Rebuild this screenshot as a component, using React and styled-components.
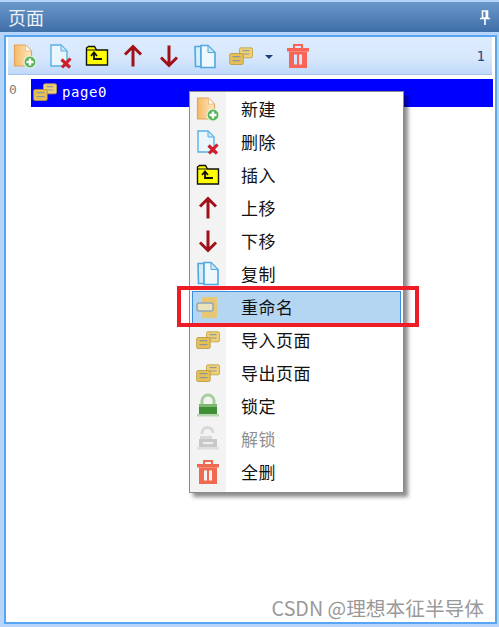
import React from "react";
import styled, { createGlobalStyle } from "styled-components";

const Global = createGlobalStyle`
  html, body { margin: 0; padding: 0; background: #fff; }
  body { font-family: "Noto Sans CJK SC", "Liberation Sans", sans-serif; }
`;

const Frame = styled.div`
  position: relative; width: 499px; height: 627px; box-sizing: border-box;
  padding: 2px 0 3px; background: #b7d4fa; overflow: hidden;
  display: flex; flex-direction: column;
`;
const TitleBar = styled.div`
  height: 30px; box-sizing: border-box; flex: none; padding: 0 9px 0 8px;
  display: flex; align-items: center; justify-content: space-between;
  background: linear-gradient(#6b98cc, #3f6fa8); color: #eef3fa;
  font-size: 18px; line-height: 30px;
`;
const Panel = styled.div`
  flex: 1; margin: 3px 2px 0 4px; padding: 0 3px 0 2px; border: 2px solid #57a6f4;
  background: #fff; display: flex; flex-direction: column; min-height: 0;
`;
const Toolbar = styled.div`
  height: 38px; box-sizing: border-box; flex: none; padding: 1px 7px 0 4px;
  display: flex; align-items: center;
  background: linear-gradient(#dcebfd 0%, #d8e8fc 55%, #c0d9fa 100%);
  border-bottom: 1px solid #a3c3ec;
`;
const ToolSlot = styled.div`
  width: 26px; height: 28px; margin-right: ${p => p.$gap ?? 10}px; flex: none;
  display: flex; align-items: center; justify-content: center;
`;
const Caret = styled.span`
  width: 0; height: 0; margin: 2px 12px 0 11px; flex: none;
  border-left: 4px solid transparent; border-right: 4px solid transparent; border-top: 4px solid #1f3f78;
`;
const Count = styled.span`
  margin-left: auto; color: #2a4a80; font: 14px "DejaVu Sans Mono", monospace;
`;
const Tree = styled.div`flex: 1; padding-top: 4px;`;
const TreeRow = styled.div`display: flex; align-items: flex-start; height: 28px;`;
const RowIndex = styled.span`
  width: 23px; flex: none; padding: 3px 0 0 1px; box-sizing: border-box; color: #808080;
  font: 13px "DejaVu Sans Mono", monospace;
`;
const RowBody = styled.div`
  flex: 1; height: 28px; margin-right: -1px; background: #0000ff; color: #fff;
  display: flex; align-items: center; padding: 0 0 2px 2px; box-sizing: border-box; gap: 5px;
  font: 14px "DejaVu Sans Mono", monospace; letter-spacing: .6px;
`;
const Menu = styled.div`
  position: absolute; left: 189px; top: 91px; width: 215px; height: 402px; box-sizing: border-box;
  padding: 1px 2px 0 2px; background: linear-gradient(90deg, #f3f3f3 0 36px, #fff 36px);
  border: 1px solid #8a8a8a; box-shadow: 4px 4px 4px rgba(0,0,0,.45);
`;
const MenuItem = styled.div`
  height: 33px; box-sizing: border-box; display: flex; align-items: center; padding-bottom: 2px;
  color: ${p => (p.$disabled ? "#8f8f8f" : "#111")};
  font-size: 17px; letter-spacing: 0.5px;
  background: ${p => (p.$active ? "#b5d6f3" : "transparent")};
  border: 1px solid ${p => (p.$active ? "#3a8ee0" : "transparent")};
`;
const MenuIcon = styled.span`
  width: 29px; flex: none; margin-right: 19px; display: flex; justify-content: center; align-items: center;
`;
const Highlight = styled.div`
  position: absolute; left: 177px; top: 286px; width: 242px; height: 41px; box-sizing: border-box;
  border: 4px solid #ee1c25; pointer-events: none;
`;
const Watermark = styled.div`
  position: absolute; right: 15px; top: 596px; color: #999; font-size: 19.700px; line-height: 24px;
`;

const NewIcon = () => (
  <svg width="26" height="26" viewBox="0 0 26 26">
    <defs>
      <linearGradient id="newFill" x1="0" x2="1" y1="0" y2="0">
        <stop offset="0" stopColor="#f6b968" /><stop offset="1" stopColor="#ffe9be" />
      </linearGradient>
    </defs>
    <path d="M2.500 2h11l6 6v15h-17z" fill="url(#newFill)" stroke="#e0a45c" strokeWidth="1.200"/>
    <path d="M13.500 2v6h6z" fill="#fff" stroke="#e8c08a"/>
    <circle cx="18" cy="19" r="6" fill="#58b058" stroke="#dff3da" strokeWidth="1.200"/>
    <path d="M18 15.500v7M14.500 19h7" stroke="#fff" strokeWidth="2.400"/>
  </svg>
);
const DeleteIcon = () => (
  <svg width="26" height="26" viewBox="0 0 26 26">
    <path d="M3 2h10l6 6v15H3z" fill="#eaf6fd" stroke="#58b0e4" strokeWidth="1.400"/>
    <path d="M13 2v6h6z" fill="#cde7f7" stroke="#58b0e4"/>
    <path d="M13.500 16.500l8.500 8M22.500 15.500l-8.500 9" stroke="#d0202c" strokeWidth="3.200"/>
  </svg>
);
const InsertIcon = () => (
  <svg width="24" height="22" viewBox="0 0 24 22">
    <path d="M1.500 5V3l2-1.500h6l2 3.500h11v15h-21z" fill="#ffff00" stroke="#111" strokeWidth="1.400"/>
    <path d="M1 5h10" stroke="#111"/>
    <path d="M17 14h-8V9M6 11l3-3.500 3 3.500" fill="none" stroke="#111" strokeWidth="1.800"/>
  </svg>
);
const UpIcon = () => (
  <svg width="20" height="24" viewBox="0 0 20 24">
    <path d="M10 22.500V2.500M2 10.500l8-8 8 8" fill="none" stroke="#a01018" strokeWidth="3"/>
  </svg>
);
const DownIcon = () => (
  <svg width="20" height="24" viewBox="0 0 20 24">
    <path d="M10 1.500v20M2 13.500l8 8 8-8" fill="none" stroke="#a01018" strokeWidth="3"/>
  </svg>
);
const CopyIcon = () => (
  <svg width="24" height="25" viewBox="0 0 24 25">
    <path d="M2 2.500h6v20H2.500z" fill="#d5ecfb" stroke="#4fa9de" strokeWidth="1.600"/>
    <path d="M8 1.500h7l7 7v15H8z" fill="#eef8fe" stroke="#4fa9de" strokeWidth="1.600"/>
    <path d="M15 1.500v7h7z" fill="#cfe7f7" stroke="#4fa9de"/>
  </svg>
);
const PagesIcon = () => (
  <svg width="24" height="18" viewBox="0 0 24 18">
    <rect x="10.500" y="0.800" width="13" height="10" rx="1.500" fill="#f0d070" stroke="#b8a04a" strokeWidth=".8"/>
    <path d="M13.500 3.700h7M13.500 7h7" stroke="#8d9aa0" strokeWidth="1.200"/>
    <rect x="0.700" y="6.500" width="13.500" height="11" rx="1.500" fill="#e8bf55" stroke="#b0953e" strokeWidth=".8"/>
    <path d="M3.500 9.700h8M3.500 13.700h8" stroke="#8a97a0" strokeWidth="1.200"/>
  </svg>
);
const RenameIcon = () => (
  <svg width="24" height="24" viewBox="0 0 24 24" opacity=".85">
    <rect x="6" y="2" width="15" height="21" rx="1" fill="#f0c45e"/>
    <rect x="1" y="8" width="16" height="8" rx="2" fill="#f4e6b4" stroke="#8aa0b0" strokeWidth="1.500"/>
  </svg>
);
const TrashIcon = ({ color = "#fa6456" }) => (
  <svg width="24" height="26" viewBox="0 0 24 26">
    <path d="M1 5h22v3.500H1z" fill={color}/>
    <path d="M8 5.500V2h8v3.500" fill="none" stroke={color} strokeWidth="2"/>
    <path fillRule="evenodd" d="M3 8.500h18V25H3zM8 11.500v10h3v-10zM13 11.500v10h3v-10z" fill={color}/>
  </svg>
);
const LockIcon = () => (
  <svg width="24" height="25" viewBox="0 0 24 25">
    <path d="M6 12V8a6 6 0 0 1 12 0v4" fill="none" stroke="#a5cf9c" strokeWidth="3"/>
    <rect x="3" y="11" width="18" height="10" fill="#3f8f35"/>
    <rect x="3" y="11" width="18" height="3" fill="#7fb874"/>
    <rect x="1" y="21" width="22" height="2.500" fill="#b8d8b0"/>
  </svg>
);
const UnlockIcon = () => (
  <svg width="24" height="25" viewBox="0 0 24 25">
    <path d="M6 8V7a5.500 5.500 0 0 1 11 0" fill="none" stroke="#d8d8d8" strokeWidth="3"/>
    <path d="M4 10h12v3H4z" fill="#d8d8d8"/>
    <rect x="3" y="13" width="18" height="8" fill="#c8c8c8"/>
    <rect x="7" y="16" width="10" height="2" fill="#eee"/>
    <rect x="1" y="21" width="22" height="2.500" fill="#dedede"/>
  </svg>
);
const Pin = () => (
  <svg width="10" height="15" viewBox="0 0 10 15">
    <path d="M2.500 1h5v7h-5zM0 8.500h10M5 8.500V15" fill="none" stroke="#fff" strokeWidth="1.600"/>
    <rect x="5.500" y="1" width="2" height="7" fill="#fff"/>
  </svg>
);

const menuItems = [
  { label: "新建", icon: <NewIcon /> },
  { label: "删除", icon: <DeleteIcon /> },
  { label: "插入", icon: <InsertIcon /> },
  { label: "上移", icon: <UpIcon /> },
  { label: "下移", icon: <DownIcon /> },
  { label: "复制", icon: <CopyIcon /> },
  { label: "重命名", icon: <RenameIcon />, active: true },
  { label: "导入页面", icon: <PagesIcon /> },
  { label: "导出页面", icon: <PagesIcon /> },
  { label: "锁定", icon: <LockIcon /> },
  { label: "解锁", icon: <UnlockIcon />, disabled: true },
  { label: "全删", icon: <TrashIcon color="#ef6a50" /> },
];

export default function App() {
  return (
    <Frame>
      <Global />
      <TitleBar>页面<Pin /></TitleBar>
      <Panel>
        <Toolbar>
          <ToolSlot><NewIcon /></ToolSlot>
          <ToolSlot><DeleteIcon /></ToolSlot>
          <ToolSlot><InsertIcon /></ToolSlot>
          <ToolSlot><UpIcon /></ToolSlot>
          <ToolSlot><DownIcon /></ToolSlot>
          <ToolSlot><CopyIcon /></ToolSlot>
          <ToolSlot $gap={0}><PagesIcon /></ToolSlot>
          <Caret />
          <ToolSlot><TrashIcon /></ToolSlot>
          <Count>1</Count>
        </Toolbar>
        <Tree>
          <TreeRow>
            <RowIndex>0</RowIndex>
            <RowBody><PagesIcon />page0</RowBody>
          </TreeRow>
        </Tree>
      </Panel>
      <Menu>
        {menuItems.map(item => (
          <MenuItem key={item.label} $active={item.active} $disabled={item.disabled}>
            <MenuIcon>{item.icon}</MenuIcon>
            {item.label}
          </MenuItem>
        ))}
      </Menu>
      <Highlight />
      <Watermark>CSDN @理想本征半导体</Watermark>
    </Frame>
  );
}
